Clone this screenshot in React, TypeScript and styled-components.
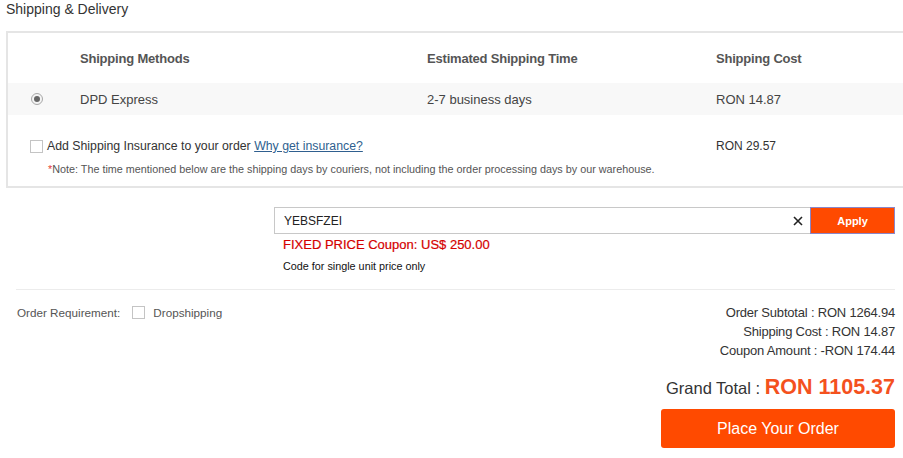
import React, { useState } from 'react';
import styled, { createGlobalStyle } from 'styled-components';

const GlobalStyle = createGlobalStyle`
  html, body { margin: 0; padding: 0; background: #fff; overflow: hidden; }
  body { font-family: "Liberation Sans", Arial, sans-serif; color: #333; }
  * { box-sizing: border-box; }
`;

const Page = styled.div`
  width: 903px;
  padding: 0 8px 0 6px;
`;

const Title = styled.h2`
  margin: 0;
  padding-top: 1px;
  height: 31px;
  font-size: 14px;
  font-weight: normal;
  line-height: 16px;
  color: #333;
`;

const Panel = styled.div`
  width: 920px;
  border: 2px solid #e5e5e5;
  padding-bottom: 11px;
`;

const Row = styled.div<{ $shaded?: boolean; $height: number }>`
  display: grid;
  grid-template-columns: 72px 347px 289px 1fr;
  align-items: center;
  height: ${({ $height }) => $height}px;
  background: ${({ $shaded }) => ($shaded ? '#f8f8f8' : 'transparent')};
  font-size: 13px;
  color: #444;
`;

const HeadCell = styled.div`
  font-weight: bold;
  color: #555;
  font-size: 13px;
  letter-spacing: -0.2px;
`;

const RadioCell = styled.div`
  padding-left: 23px;
  display: flex;
  align-items: center;
`;

const Radio = styled.span`
  width: 12px;
  height: 12px;
  border-radius: 50%;
  border: 1px solid #a8a8a8;
  background: #f4f4f4;
  display: flex;
  align-items: center;
  justify-content: center;
  &::after {
    content: '';
    width: 6px;
    height: 6px;
    border-radius: 50%;
    background: #666;
  }
`;

const InsuranceRow = styled.div`
  display: grid;
  grid-template-columns: 686px 1fr;
  align-items: center;
  margin-top: 24px;
  padding-left: 22px;
`;

const CheckLabel = styled.label<{ $gap?: number; $muted?: boolean }>`
  display: flex;
  align-items: center;
  gap: ${({ $gap }) => $gap ?? 4}px;
  font-size: ${({ $muted }) => ($muted ? 11.7 : 12.3)}px;
  color: ${({ $muted }) => ($muted ? '#555' : '#333')};
`;

const Box = styled.span`
  width: 13px;
  height: 13px;
  border: 1px solid #c4c4c4;
  background: #fff;
  flex-shrink: 0;
`;

const Link = styled.a`
  color: #2f5f8f;
  text-decoration: underline;
  cursor: pointer;
`;

const Cost = styled.div`
  font-size: 12px;
  color: #333;
`;

const Note = styled.p`
  margin: 10px 0 0 40px;
  font-size: 10.8px;
  color: #555;
  line-height: 12px;
  span { color: #e53935; }
`;

const Coupon = styled.div`
  margin: 19px 0 0 268px;
  width: 621px;
`;

const InputRow = styled.div`
  display: flex;
  height: 27px;
`;

const InputWrap = styled.div`
  flex: 1;
  display: flex;
  align-items: center;
  border: 1px solid #c8c8c8;
  border-right: none;
  padding: 0 7px 0 9px;
`;

const Input = styled.input`
  flex: 1;
  border: none;
  outline: none;
  font-family: inherit;
  font-size: 12px;
  color: #222;
  padding: 0;
  background: transparent;
`;

const Clear = styled.button`
  border: none;
  background: none;
  padding: 0;
  display: flex;
  cursor: pointer;
`;

const ApplyButton = styled.button`
  width: 85px;
  border: 1px solid #8a86c8;
  background: #ff4a00;
  color: #fff;
  font-family: inherit;
  font-size: 11px;
  font-weight: bold;
  cursor: pointer;
`;

const CouponMsg = styled.div`
  margin: 3px 0 0 9px;
  font-size: 13px;
  color: #d40000;
  line-height: 16px;
  -webkit-text-stroke: 0.2px #d40000;
`;

const CouponHint = styled.div`
  margin: 7px 0 0 9px;
  font-size: 10.8px;
  color: #111;
  line-height: 12px;
`;

const Divider = styled.hr`
  margin: 17px 0 0 10px;
  width: 879px;
  border: none;
  border-top: 1px solid #ececec;
`;

const Footer = styled.div`
  display: flex;
  justify-content: space-between;
  padding: 12px 0 0 11px;
  width: 889px;
`;

const Requirement = styled.div`
  display: flex;
  align-items: center;
  font-size: 11.7px;
  color: #555;
  height: 21px;
  gap: 12px;
`;

const Summary = styled.div`
  display: flex;
  flex-direction: column;
  align-items: flex-end;
  padding-top: 1px;
`;

const Line = styled.div`
  font-size: 13px;
  letter-spacing: -0.2px;
  line-height: 19px;
  color: #333;
`;

const Grand = styled.div`
  margin-top: 14px;
  font-size: 16.5px;
  color: #333;
  line-height: 26px;
  strong {
    font-size: 21.5px;
    color: #f4511e;
  }
`;

const OrderButton = styled.button`
  margin-top: 8px;
  width: 234px;
  height: 39px;
  border: none;
  border-radius: 3px;
  background: #ff4a00;
  color: #fff;
  font-family: inherit;
  font-size: 16px;
  cursor: pointer;
`;

export default function App() {
  const [code, setCode] = useState('YEBSFZEI');
  return (
    <Page>
      <GlobalStyle />
      <Title>Shipping &amp; Delivery</Title>
      <Panel>
        <Row $height={50}>
          <div />
          <HeadCell>Shipping Methods</HeadCell>
          <HeadCell>Estimated Shipping Time</HeadCell>
          <HeadCell>Shipping Cost</HeadCell>
        </Row>
        <Row $shaded $height={32}>
          <RadioCell><Radio /></RadioCell>
          <div>DPD Express</div>
          <div>2-7 business days</div>
          <div>RON 14.87</div>
        </Row>
        <InsuranceRow>
          <CheckLabel>
            <Box />
            <span>Add Shipping Insurance to your order <Link>Why get insurance?</Link></span>
          </CheckLabel>
          <Cost>RON 29.57</Cost>
        </InsuranceRow>
        <Note>
          <span>*</span>Note: The time mentioned below are the shipping days by couriers, not including the order processing days by our warehouse.
        </Note>
      </Panel>
      <Coupon>
        <InputRow>
          <InputWrap>
            <Input value={code} onChange={(e) => setCode(e.target.value)} />
            <Clear type="button" onClick={() => setCode('')}>
              <svg width="10" height="10" viewBox="0 0 10 10">
                <path d="M1 1L9 9M9 1L1 9" stroke="#222" strokeWidth="1.6" />
              </svg>
            </Clear>
          </InputWrap>
          <ApplyButton type="button">Apply</ApplyButton>
        </InputRow>
        <CouponMsg>FIXED PRICE Coupon: US$ 250.00</CouponMsg>
        <CouponHint>Code for single unit price only</CouponHint>
      </Coupon>
      <Divider />
      <Footer>
        <Requirement>
          <span>Order Requirement:</span>
          <CheckLabel $muted $gap={8}>
            <Box />
            Dropshipping
          </CheckLabel>
        </Requirement>
        <Summary>
          <Line>Order Subtotal : RON 1264.94</Line>
          <Line>Shipping Cost : RON 14.87</Line>
          <Line>Coupon Amount : -RON 174.44</Line>
          <Grand>Grand Total : <strong>RON 1105.37</strong></Grand>
          <OrderButton type="button">Place Your Order</OrderButton>
        </Summary>
      </Footer>
    </Page>
  );
}
